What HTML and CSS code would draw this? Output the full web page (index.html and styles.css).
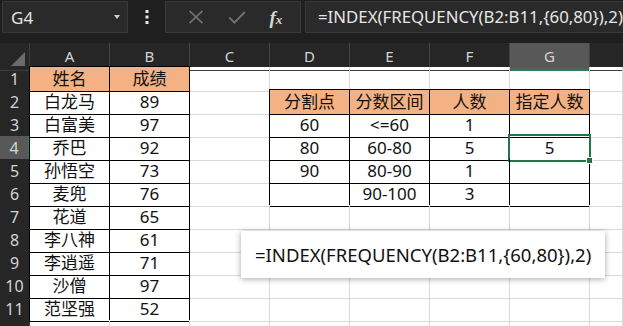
FILE: index.html
```html
<!DOCTYPE html>
<html>
  <head>
    <title>FREQUENCY</title>
    <link rel="stylesheet" href="styles.css">
  </head>
  <body>
    <div class="app">
      <div class="toolbar">
        <div class="name-box">
          <span>G4</span>
          <span class="caret"></span>
        </div>
        <div class="more">
          <svg width="4" height="14" viewBox="0 0 4 14"><rect x="0.5" y="0" width="3" height="3" fill="#e6e6e6"/><rect x="0.5" y="5.5" width="3" height="3" fill="#e6e6e6"/><rect x="0.5" y="11" width="3" height="3" fill="#e6e6e6"/></svg>
        </div>
        <div class="fx-buttons">
          <svg width="16" height="14" viewBox="0 0 16 14"><path d="M1.5 0.8 L14.5 13.2 M14.5 0.8 L1.5 13.2" stroke="#707070" stroke-width="1.6" fill="none"/></svg>
          <svg width="18" height="13" viewBox="0 0 18 13"><path d="M1.2 6.5 L6.5 11.6 L16.8 1" stroke="#707070" stroke-width="2" fill="none"/></svg>
          <span class="fx">f<small>x</small></span>
        </div>
        <div class="formula-bar">=INDEX(FREQUENCY(B2:B11,{60,80}),2)</div>
      </div>

      <div class="sheet">
        <div class="row head-row">
          <div class="corner"><span class="tri"></span></div>
          <div class="col-head">A</div>
          <div class="col-head">B</div>
          <div class="col-head">C</div>
          <div class="col-head">D</div>
          <div class="col-head">E</div>
          <div class="col-head">F</div>
          <div class="col-head active">G</div>
          <div class="col-head last"></div>
        </div>

        <div class="row">
          <div class="row-head">1</div>
          <div class="cell b fill blt">姓名</div>
          <div class="cell b fill bt">成绩</div>
          <div class="cell"></div>
          <div class="cell"></div>
          <div class="cell"></div>
          <div class="cell"></div>
          <div class="cell"></div>
          <div class="cell"></div>
        </div>
        <div class="row">
          <div class="row-head">2</div>
          <div class="cell b bl">白龙马</div>
          <div class="cell b">89</div>
          <div class="cell"></div>
          <div class="cell b fill blt">分割点</div>
          <div class="cell b fill bt">分数区间</div>
          <div class="cell b fill bt">人数</div>
          <div class="cell b fill bt">指定人数</div>
          <div class="cell"></div>
        </div>
        <div class="row">
          <div class="row-head">3</div>
          <div class="cell b bl">白富美</div>
          <div class="cell b">97</div>
          <div class="cell"></div>
          <div class="cell b bl">60</div>
          <div class="cell b">&lt;=60</div>
          <div class="cell b">1</div>
          <div class="cell b"></div>
          <div class="cell"></div>
        </div>
        <div class="row">
          <div class="row-head active">4</div>
          <div class="cell b bl">乔巴</div>
          <div class="cell b">92</div>
          <div class="cell"></div>
          <div class="cell b bl">80</div>
          <div class="cell b">60-80</div>
          <div class="cell b">5</div>
          <div class="cell b selected">5<span class="handle"></span></div>
          <div class="cell"></div>
        </div>
        <div class="row">
          <div class="row-head">5</div>
          <div class="cell b bl">孙悟空</div>
          <div class="cell b">73</div>
          <div class="cell"></div>
          <div class="cell b bl">90</div>
          <div class="cell b">80-90</div>
          <div class="cell b">1</div>
          <div class="cell b"></div>
          <div class="cell"></div>
        </div>
        <div class="row">
          <div class="row-head">6</div>
          <div class="cell b bl">麦兜</div>
          <div class="cell b">76</div>
          <div class="cell"></div>
          <div class="cell b bl"></div>
          <div class="cell b">90-100</div>
          <div class="cell b">3</div>
          <div class="cell b"></div>
          <div class="cell"></div>
        </div>
        <div class="row">
          <div class="row-head">7</div>
          <div class="cell b bl">花道</div>
          <div class="cell b">65</div>
          <div class="cell"></div>
          <div class="cell"></div>
          <div class="cell"></div>
          <div class="cell"></div>
          <div class="cell"></div>
          <div class="cell"></div>
        </div>
        <div class="row">
          <div class="row-head">8</div>
          <div class="cell b bl">李八神</div>
          <div class="cell b">61</div>
          <div class="cell"></div>
          <div class="cell"></div>
          <div class="cell"></div>
          <div class="cell"></div>
          <div class="cell"></div>
          <div class="cell"></div>
        </div>
        <div class="row">
          <div class="row-head">9</div>
          <div class="cell b bl">李逍遥</div>
          <div class="cell b">71</div>
          <div class="cell"></div>
          <div class="cell"></div>
          <div class="cell"></div>
          <div class="cell"></div>
          <div class="cell"></div>
          <div class="cell"></div>
        </div>
        <div class="row">
          <div class="row-head">10</div>
          <div class="cell b bl">沙僧</div>
          <div class="cell b">97</div>
          <div class="cell"></div>
          <div class="cell"></div>
          <div class="cell"></div>
          <div class="cell"></div>
          <div class="cell"></div>
          <div class="cell"></div>
        </div>
        <div class="row">
          <div class="row-head">11</div>
          <div class="cell b bl">范坚强</div>
          <div class="cell b">52</div>
          <div class="cell"></div>
          <div class="cell"></div>
          <div class="cell"></div>
          <div class="cell"></div>
          <div class="cell"></div>
          <div class="cell"></div>
        </div>
        <div class="row">
          <div class="row-head"></div>
          <div class="cell"></div>
          <div class="cell"></div>
          <div class="cell"></div>
          <div class="cell"></div>
          <div class="cell"></div>
          <div class="cell"></div>
          <div class="cell"></div>
          <div class="cell"></div>
        </div>

        <!-- formula callout -->
        <div class="callout">=INDEX(FREQUENCY(B2:B11,{60,80}),2)</div>
      </div>
    </div>
  </body>
</html>
```

FILE: styles.css
```css
body {
  margin: 0;
  background-color: #1f1f1f;
  font-family: "Noto Sans", "Noto Sans CJK SC", sans-serif;
  overflow: hidden;
}

.app {
  width: 623px;
  height: 326px;
  overflow: hidden;
}

.toolbar {
  display: flex;
  align-items: flex-start;
  height: 43px;
  padding-top: 1px;
  box-sizing: border-box;
  background-color: #1f1f1f;
}

.name-box {
  display: flex;
  align-items: center;
  justify-content: space-between;
  width: 126px;
  height: 32px;
  margin-left: 2px;
  padding: 0 7px 0 8px;
  box-sizing: border-box;
  background-color: #2a2a2a;
  border: 1px solid #383838;
  color: #e2e2e2;
  font-size: 17px;
}

.caret {
  width: 0;
  height: 0;
  border-left: 3.5px solid transparent;
  border-right: 3.5px solid transparent;
  border-top: 4px solid #d0d0d0;
}

.more {
  width: 38px;
  height: 32px;
  display: flex;
  align-items: center;
  justify-content: center;
}

.fx-buttons {
  display: flex;
  align-items: center;
  justify-content: space-around;
  width: 136px;
  height: 32px;
  padding: 0 6px 0 10px;
  box-sizing: border-box;
  background-color: #2a2a2a;
  border: 1px solid #383838;
}

.fx {
  font-family: "Liberation Serif", serif;
  font-style: italic;
  font-weight: bold;
  font-size: 19px;
  color: #d6d6d6;
  line-height: 1;
}

.fx small {
  font-size: 13px;
}

.formula-bar {
  flex: 1;
  height: 32px;
  margin-left: 4px;
  padding-left: 12px;
  box-sizing: border-box;
  background-color: #2a2a2a;
  border: 1px solid #383838;
  border-right: none;
  color: #e6e6e6;
  font-size: 16.8px;
  line-height: 30px;
  white-space: nowrap;
}

.sheet {
  position: relative;
  background-color: #fff;
}

.row {
  display: grid;
  grid-template-columns: 30px repeat(7, 80px) 1fr;
  height: 23px;
}

.head-row {
  height: 24px;
  background-color: #262626;
}

.corner {
  position: relative;
  border-right: 1px solid #3e3e3e;
  border-bottom: 1px solid #3e3e3e;
}

.tri {
  position: absolute;
  right: 4px;
  bottom: 4px;
  width: 0;
  height: 0;
  border-left: 14px solid transparent;
  border-bottom: 14px solid #6b6b6b;
}

.col-head {
  border-right: 1px solid #444;
  border-bottom: 1px solid #3e3e3e;
  color: #d4d4d4;
  font-size: 15px;
  text-align: center;
  line-height: 26px;
}

.col-head.active {
  background-color: #585858;
  border-bottom: 2px solid #2f7d52;
}

.col-head.last {
  border-right: none;
}

.row-head {
  background-color: #262626;
  border-right: 1px solid #3e3e3e;
  border-bottom: 1px solid #3e3e3e;
  color: #d4d4d4;
  font-size: 16px;
  text-align: center;
  line-height: 24px;
}

.row-head.active {
  background-color: #585858;
  border-right: 2px solid #2f7d52;
}

.cell {
  position: relative;
  box-sizing: border-box;
  border-right: 1px solid #d9d9d9;
  border-bottom: 1px solid #d9d9d9;
  color: #111;
  font-size: 17px;
  text-align: center;
  line-height: 23px;
  white-space: nowrap;
}

.cell.b {
  border-right-color: #000;
  border-bottom-color: #000;
}

.cell.fill {
  background-color: #f4b183;
}

.cell.bl {
  box-shadow: -1px 0 0 #000;
}

.cell.bt {
  box-shadow: 0 -1px 0 #000;
}

.cell.blt {
  box-shadow: -1px 0 0 #000, 0 -1px 0 #000, -1px -1px 0 #000;
}

.cell.selected::after {
  content: "";
  position: absolute;
  left: -2px;
  top: -2px;
  right: -2px;
  bottom: -2px;
  border: 2px solid #227447;
}

.handle {
  position: absolute;
  right: -4px;
  bottom: -4px;
  width: 5px;
  height: 5px;
  background-color: #227447;
  border: 1px solid #fff;
  z-index: 2;
}

.callout {
  position: absolute;
  left: 241px;
  top: 188px;
  width: 364px;
  height: 47px;
  box-sizing: border-box;
  padding-left: 14px;
  background-color: #fff;
  box-shadow: 0 1px 6px rgba(0, 0, 0, 0.35);
  color: #111;
  font-size: 18.5px;
  line-height: 47px;
  white-space: nowrap;
}
```
